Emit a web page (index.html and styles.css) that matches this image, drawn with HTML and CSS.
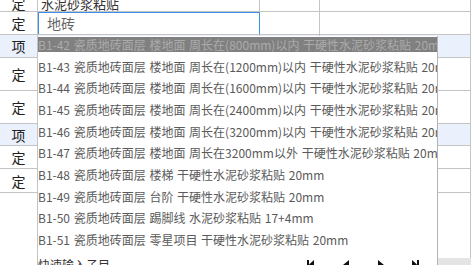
FILE: index.html
```html
<!DOCTYPE html>
<html lang="zh-CN">
<head>
    <meta charset="UTF-8">
    <meta name="viewport" content="width=device-width, initial-scale=1.0">
    <title>定额选择</title>
    <link rel="stylesheet" href="styles.css">
</head>
<body>
    <div class="sheet">
        <div class="grid">
            <div class="row r0"><div class="cell label">定</div><div class="cell name">水泥砂浆粘贴</div><div class="cell"></div><div class="cell"></div></div>
            <div class="row r1"><div class="cell label">定</div><div class="cell name"><div class="editor">地砖</div></div><div class="cell"></div><div class="cell"></div></div>
            <div class="row r2 sel"><div class="cell label">项</div><div class="cell"></div><div class="cell"></div><div class="cell"></div></div>
            <div class="row r3"><div class="cell label">定</div><div class="cell"></div><div class="cell"></div><div class="cell"></div></div>
            <div class="row r3"><div class="cell label">定</div><div class="cell"></div><div class="cell"></div><div class="cell"></div></div>
            <div class="row r5 sel"><div class="cell label">项</div><div class="cell"></div><div class="cell"></div><div class="cell"></div></div>
            <div class="row r1"><div class="cell label">定</div><div class="cell"></div><div class="cell"></div><div class="cell"></div></div>
            <div class="row r7"><div class="cell label">定</div><div class="cell"></div><div class="cell"></div><div class="cell"></div></div>
            <div class="row rest"><div class="cell label"></div><div class="cell"></div><div class="cell"></div><div class="cell"></div></div>
        </div>
        <div class="scrollbar"></div>

        <div class="dropdown">
            <ul class="list">
                <li class="item active">B1-42 瓷质地砖面层 楼地面 周长在(800mm)以内 干硬性水泥砂浆粘贴 20mm</li>
                <li class="item">B1-43 瓷质地砖面层 楼地面 周长在(1200mm)以内 干硬性水泥砂浆粘贴 20mm</li>
                <li class="item">B1-44 瓷质地砖面层 楼地面 周长在(1600mm)以内 干硬性水泥砂浆粘贴 20mm</li>
                <li class="item">B1-45 瓷质地砖面层 楼地面 周长在(2400mm)以内 干硬性水泥砂浆粘贴 20mm</li>
                <li class="item">B1-46 瓷质地砖面层 楼地面 周长在(3200mm)以内 干硬性水泥砂浆粘贴 20mm</li>
                <li class="item">B1-47 瓷质地砖面层 楼地面 周长在3200mm以外 干硬性水泥砂浆粘贴 20mm</li>
                <li class="item">B1-48 瓷质地砖面层 楼梯 干硬性水泥砂浆粘贴 20mm</li>
                <li class="item">B1-49 瓷质地砖面层 台阶 干硬性水泥砂浆粘贴 20mm</li>
                <li class="item">B1-50 瓷质地砖面层 踢脚线 水泥砂浆粘贴 17+4mm</li>
                <li class="item">B1-51 瓷质地砖面层 零星项目 干硬性水泥砂浆粘贴 20mm</li>
            </ul>
            <div class="footer">
                <span class="quick">快速输入子目</span>
                <div class="pager">
                    <span class="btn"><svg width="14" height="10" viewBox="0 0 14 10"><rect x="0" y="6" width="2" height="2" fill="#3a86d6"/><rect x="3" y="1" width="2" height="9" fill="#111"/><path d="M10 1 L5 5.5 L10 10 Z" fill="#111"/></svg></span>
                    <span class="btn"><svg width="14" height="10" viewBox="0 0 14 10"><rect x="0" y="6" width="2" height="2" fill="#3a86d6"/><path d="M10 1 L4 6 L10 10 Z" fill="#111"/></svg></span>
                    <span class="btn"><svg width="14" height="10" viewBox="0 0 14 10"><rect x="0" y="6" width="2" height="2" fill="#3a86d6"/><path d="M4 1 L10 6 L4 10 Z" fill="#111"/></svg></span>
                    <span class="btn"><svg width="14" height="10" viewBox="0 0 14 10"><rect x="0" y="6" width="2" height="2" fill="#3a86d6"/><path d="M3 1 L8 5.5 L3 10 Z" fill="#111"/><rect x="8" y="1" width="2" height="9" fill="#111"/></svg></span>
                </div>
            </div>
        </div>
    </div>
</body>
</html>
```

FILE: styles.css
```css
body {
    margin: 0;
    padding: 0;
    background-color: white;
    font-family: "Noto Sans CJK SC", "Noto Sans", sans-serif;
    overflow: hidden;
}
.sheet {
    position: relative;
    width: 471px;
    height: 265px;
    overflow: hidden;
}
.grid {
    display: flex;
    flex-direction: column;
}
.row {
    display: grid;
    grid-template-columns: 38px 222px 60px 1fr;
    height: 23px;
}
.row.r0 { height: 12px; }
.row.r3 { height: 33px; }
.row.r5 { height: 22px; }
.row.r7 { height: 24px; }
.row.rest { height: 65px; }
.row.sel { background-color: #eaf1fc; }
.cell {
    box-sizing: border-box;
    border-right: 1px solid #c4c4c4;
    border-bottom: 1px solid #c4c4c4;
    overflow: hidden;
    display: flex;
    align-items: center;
}
.row.rest .cell { border-bottom: none; }
.cell.label {
    justify-content: center;
    font-size: 14px;
    color: #222;
}
.row.r0 .cell {
    align-items: flex-end;
    line-height: 15px;
}
.cell.name {
    font-size: 13px;
    color: #333;
    padding-left: 3px;
}
.row.r1 .cell.name {
    padding: 0;
    border-right: none;
}
.editor {
    box-sizing: border-box;
    width: 100%;
    height: 23px;
    margin-top: 0;
    border: 1px solid #3d8ee8;
    padding-left: 8px;
    font-size: 14px;
    color: #666;
    display: flex;
    align-items: center;
    background-color: white;
}
.scrollbar {
    position: absolute;
    left: 437px;
    right: 0;
    top: 258px;
    height: 7px;
    background-color: #e4e4e4;
}
.dropdown {
    position: absolute;
    left: 37px;
    top: 36px;
    width: 399px;
    height: 240px;
    background-color: white;
    border-left: 1px solid #c4c4c4;
    border-right: 1px solid #b4b4b4;
    overflow: hidden;
}
.list {
    list-style: none;
    margin: 0;
    padding: 1px 0 0 0;
}
.item {
    height: 15px;
    margin-bottom: 6.67px;
    line-height: 15px;
    font-size: 12px;
    color: #5a5a5a;
    white-space: nowrap;
    word-spacing: 1px;
    overflow: hidden;
}
.item.active {
    background-color: #808080;
    color: #ababab;
}
.footer {
    display: flex;
    align-items: flex-start;
    justify-content: space-between;
    padding-top: 3px;
    height: 20px;
}
.quick {
    font-size: 12px;
    line-height: 15px;
    color: #333;
}
.pager {
    display: flex;
    gap: 21px;
    padding-right: 14px;
    padding-top: 2px;
}
.btn svg {
    display: block;
}
```
